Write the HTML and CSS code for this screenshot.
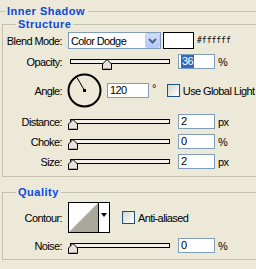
FILE: index.html
```html
<!DOCTYPE html>
<html lang="en">
<head>
  <meta charset="UTF-8">
  <title>Inner Shadow</title>
  <link rel="stylesheet" href="styles.css">
</head>
<body>
  <fieldset class="group outer">
    <legend>Inner Shadow</legend>

    <fieldset class="group">
      <legend>Structure</legend>

      <div class="row blend">
        <span class="lbl">Blend Mode:</span>
        <div class="select">
          <span class="select-text">Color Dodge</span>
          <span class="select-btn">
            <svg width="9" height="6" viewBox="0 0 9 6"><path d="M1 1 L4.5 4.5 L8 1" fill="none" stroke="#4d6185" stroke-width="2"/></svg>
          </span>
        </div>
        <div class="swatch"></div>
        <span class="hex">#ffffff</span>
      </div>

      <div class="row">
        <span class="lbl">Opacity:</span>
        <div class="slider">
          <div class="track"></div>
          <svg class="thumb" style="left: 34px" width="10" height="11" viewBox="0 0 10 11"><path d="M5 0.5 L9.5 5 L9.5 10.5 L0.5 10.5 L0.5 5 Z" fill="#e6e4da" stroke="#000"/><path d="M1.5 9.5 L8.5 9.5" stroke="#a6a399"/></svg>
        </div>
        <div class="field"><span class="sel">36</span></div>
        <span class="unit">%</span>
      </div>

      <div class="row angle">
        <span class="lbl">Angle:</span>
        <svg class="dial" width="35" height="35" viewBox="0 0 35 35">
          <circle cx="17.5" cy="17.5" r="16" fill="none" stroke="#000" stroke-width="2"/>
          <line x1="17.5" y1="17.5" x2="10" y2="4.5" stroke="#000" stroke-width="1"/>
          <rect x="16" y="16" width="3" height="3" fill="#000"/>
        </svg>
        <div class="field wide">120</div>
        <span class="deg">°</span>
        <span class="check"></span>
        <span class="check-text">Use Global Light</span>
      </div>

      <div class="row gap6">
        <span class="lbl">Distance:</span>
        <div class="slider">
          <div class="track"></div>
          <svg class="thumb" style="left: 0px" width="10" height="11" viewBox="0 0 10 11"><path d="M5 0.5 L9.5 5 L9.5 10.5 L0.5 10.5 L0.5 5 Z" fill="#e6e4da" stroke="#000"/><path d="M1.5 9.5 L8.5 9.5" stroke="#a6a399"/></svg>
        </div>
        <div class="field">2</div>
        <span class="unit">px</span>
      </div>

      <div class="row gap5">
        <span class="lbl">Choke:</span>
        <div class="slider">
          <div class="track"></div>
          <svg class="thumb" style="left: -0.5px" width="10" height="11" viewBox="0 0 10 11"><path d="M5 0.5 L9.5 5 L9.5 10.5 L0.5 10.5 L0.5 5 Z" fill="#e6e4da" stroke="#000"/><path d="M1.5 9.5 L8.5 9.5" stroke="#a6a399"/></svg>
        </div>
        <div class="field">0</div>
        <span class="unit">%</span>
      </div>

      <div class="row gap5">
        <span class="lbl">Size:</span>
        <div class="slider">
          <div class="track"></div>
          <svg class="thumb" style="left: 0px" width="10" height="11" viewBox="0 0 10 11"><path d="M5 0.5 L9.5 5 L9.5 10.5 L0.5 10.5 L0.5 5 Z" fill="#e6e4da" stroke="#000"/><path d="M1.5 9.5 L8.5 9.5" stroke="#a6a399"/></svg>
        </div>
        <div class="field">2</div>
        <span class="unit">px</span>
      </div>
    </fieldset>

    <fieldset class="group quality">
      <legend>Quality</legend>

      <div class="row contour">
        <span class="lbl">Contour:</span>
        <svg class="curve" width="42" height="31" viewBox="0 0 42 31">
          <rect x="0.5" y="0.5" width="41" height="30" fill="#fff" stroke="#000"/>
          <path d="M1 30 L30 1 L30 30 Z" fill="#aaa79b"/>
          <line x1="30.5" y1="1" x2="30.5" y2="30" stroke="#000"/>
          <path d="M33 11 L39 11 L36 15 Z" fill="#000"/>
        </svg>
        <span class="check aa"></span>
        <span class="check-text">Anti-aliased</span>
      </div>

      <div class="row gap5">
        <span class="lbl">Noise:</span>
        <div class="slider">
          <div class="track"></div>
          <svg class="thumb" style="left: -0.5px" width="10" height="11" viewBox="0 0 10 11"><path d="M5 0.5 L9.5 5 L9.5 10.5 L0.5 10.5 L0.5 5 Z" fill="#e6e4da" stroke="#000"/><path d="M1.5 9.5 L8.5 9.5" stroke="#a6a399"/></svg>
        </div>
        <div class="field">0</div>
        <span class="unit">%</span>
      </div>
    </fieldset>
  </fieldset>
</body>
</html>
```

FILE: styles.css
```css
html, body {
  margin: 0;
  width: 256px;
  height: 269px;
  overflow: hidden;
  background-color: #ece9d8;
}
body {
  font-family: "Liberation Sans", Arial, sans-serif;
  font-size: 11px;
  letter-spacing: -0.6px;
  color: #000;
}
.group {
  margin: 0;
  padding: 0;
  border: 1px solid #c3c0b0;
  min-width: 0;
}
.group legend {
  font-weight: bold;
  font-size: 11px;
  line-height: 13px;
  letter-spacing: 0.5px;
  color: #0a48d8;
  padding: 0 2px;
  margin-left: 13px;
}
.outer {
  margin: 5px -10px 0 -10px;
  padding: 0 0 0 11px;
  border-bottom: none;
}
.outer > legend {
  margin-left: 3px;
  padding: 0 3px 0 2px;
}
.outer > .group {
  margin-right: 0;
  padding-bottom: 7px;
}
.quality {
  margin-top: 9px;
  padding-bottom: 6px !important;
}
.row {
  display: flex;
  align-items: center;
  height: 15px;
  margin-top: 5px;
}
.row.blend {
  height: 17px;
  margin-top: 1px;
}
.row.angle {
  height: 35px;
  margin-top: 4px;
}
.row.gap6 {
  margin-top: 6px;
}
.row.contour {
  height: 31px;
  margin-top: 3px;
}
.lbl {
  flex: none;
  width: 59px;
  margin-right: 6px;
  text-align: right;
}
.select {
  flex: none;
  display: flex;
  align-items: center;
  justify-content: space-between;
  box-sizing: border-box;
  width: 93px;
  height: 17px;
  border: 1px solid #7f9db9;
  background: #fff;
}
.select-text {
  padding-left: 2px;
}
.select-btn {
  display: flex;
  align-items: center;
  justify-content: center;
  box-sizing: border-box;
  width: 15px;
  height: 15px;
  border: 1px solid #b9cdf5;
  border-radius: 2px;
  background: linear-gradient(#d2defc, #b4c8f6);
}
.swatch {
  flex: none;
  box-sizing: border-box;
  width: 31px;
  height: 17px;
  margin-left: 2px;
  border: 1px solid #000;
  background: #fff;
}
.hex {
  margin-left: 3px;
  font-family: "DejaVu Sans Mono", monospace;
  font-size: 8px;
  letter-spacing: 0;
}
.slider {
  flex: none;
  position: relative;
  align-self: stretch;
  width: 104px;
}
.track {
  margin: 5px 0 0 2px;
  width: 98px;
  height: 3px;
  border: 1px solid #000;
  background: #f3f1e8;
}
.thumb {
  position: absolute;
  top: 5px;
}
.field {
  flex: none;
  box-sizing: border-box;
  width: 37px;
  height: 15px;
  margin-left: 6px;
  padding-left: 2px;
  line-height: 13px;
  border: 1px solid #7f9db9;
  background: #fff;
}
.field.wide {
  width: 42px;
  margin-left: 5px;
}
.sel {
  display: inline-block;
  padding: 0 1px;
  background: #316ac5;
  color: #fff;
}
.unit {
  margin-left: 3px;
}
.dial {
  flex: none;
  margin-left: -1px;
}
.deg {
  align-self: flex-start;
  margin: 9px 0 0 3px;
}
.check {
  flex: none;
  box-sizing: border-box;
  width: 13px;
  height: 13px;
  margin-left: 11px;
  border: 1px solid #1c5180;
  background: linear-gradient(135deg, #d6d5cc, #fff);
}
.check.aa {
  margin-left: 12px;
}
.check-text {
  margin-left: 3px;
}
.curve {
  flex: none;
}
```
